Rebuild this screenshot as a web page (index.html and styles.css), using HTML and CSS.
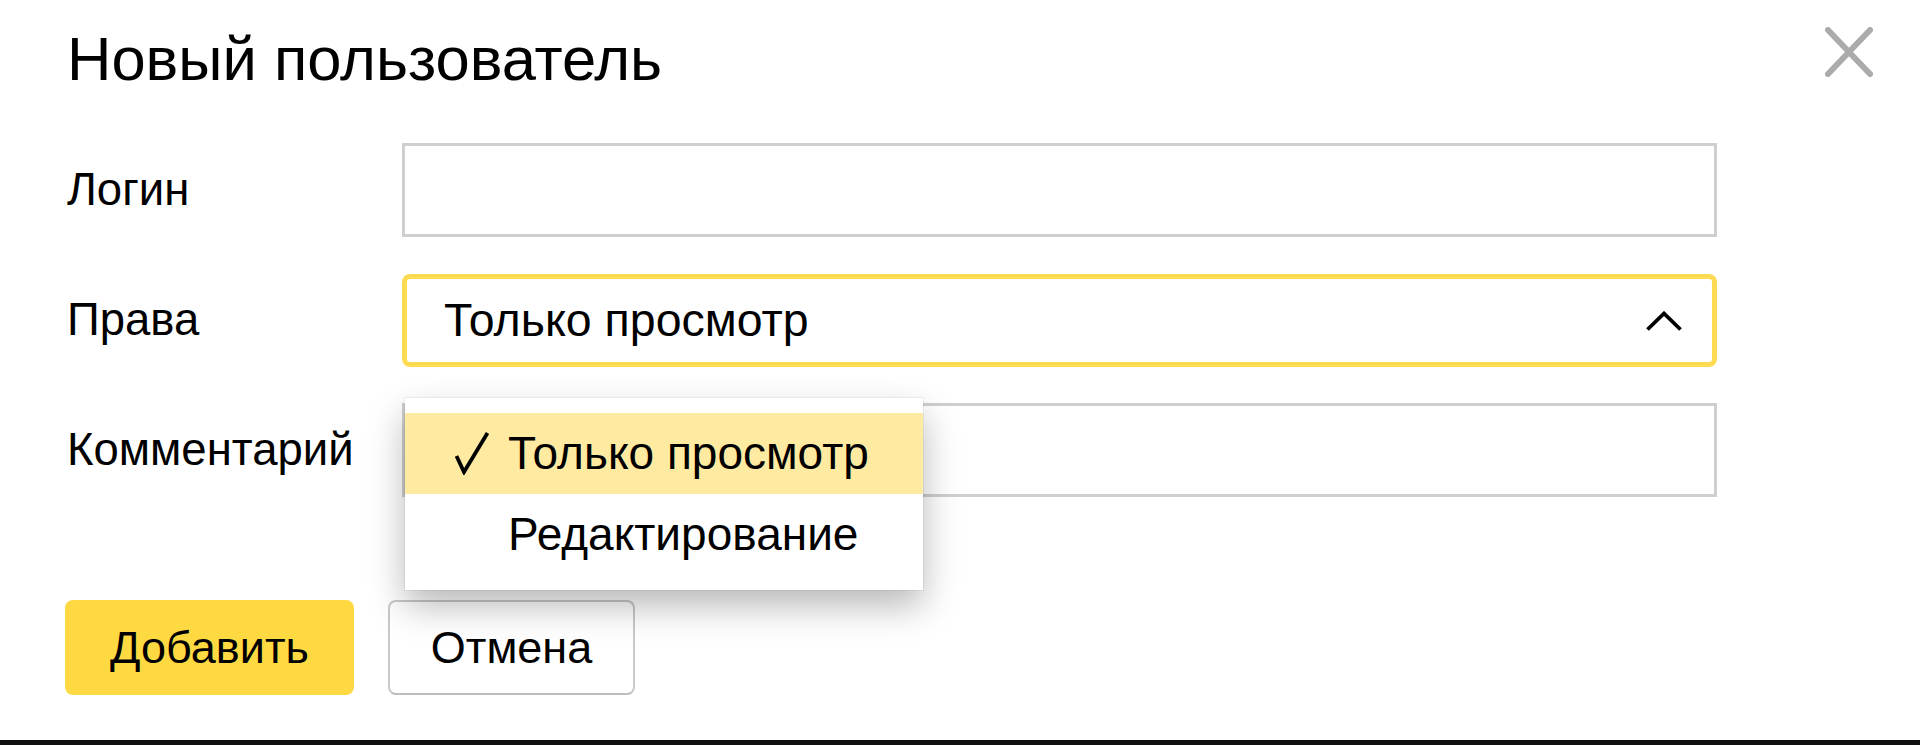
FILE: index.html
```html
<!DOCTYPE html>
<html lang="ru">
<head>
<meta charset="utf-8">
<title>Новый пользователь</title>
<link rel="stylesheet" href="styles.css">
</head>
<body>
<div class="page">
  <div class="dialog">
    <header class="head">
      <h1 class="title">Новый пользователь</h1>
      <button class="close" type="button" aria-label="Закрыть">
        <svg width="48" height="50" viewBox="0 0 48 50"><path d="M3 3 L45 47 M45 3 L3 47" stroke="#ababab" stroke-width="6" stroke-linecap="round" fill="none"/></svg>
      </button>
    </header>
    <div class="form">
      <div class="row">
        <div class="label">Логин</div>
        <div class="field input"></div>
      </div>
      <div class="row">
        <div class="label">Права</div>
        <div class="select-wrap">
          <div class="field select">
            <span class="select-text">Только просмотр</span>
            <svg class="chevron" width="38" height="21" viewBox="0 0 38 21"><path d="M2.5 18.5 L19 2.5 L35.5 18.5" stroke="#000" stroke-width="3.8" fill="none"/></svg>
          </div>
          <div class="menu">
            <div class="item item-active">
              <svg class="check" width="36" height="44" viewBox="0 0 36 44"><path d="M2.5 25 L10 41 L33.5 2" stroke="#000" stroke-width="3.8" fill="none" stroke-linejoin="miter"/></svg>
              <span>Только просмотр</span>
            </div>
            <div class="item"><span>Редактирование</span></div>
          </div>
        </div>
      </div>
      <div class="row">
        <div class="label">Комментарий</div>
        <div class="field input"></div>
      </div>
    </div>
    <div class="actions">
      <button class="btn btn-primary" type="button">Добавить</button>
      <button class="btn btn-default" type="button">Отмена</button>
    </div>
  </div>
  <div class="bottom-bar"></div>
</div>
</body>
</html>
```

FILE: styles.css
```css
html, body {
  margin: 0;
  padding: 0;
  background: #ffffff;
}

body {
  font-family: "Liberation Sans", Arial, sans-serif;
  color: #000;
}

.page {
  min-height: 745px;
  height: 100vh;
  display: flex;
  flex-direction: column;
  overflow: hidden;
}

.dialog {
  padding: 24px 47px 0 67px;
}

.head {
  display: flex;
  justify-content: space-between;
  align-items: flex-start;
}

.title {
  margin: 0;
  font-size: 61.5px;
  line-height: 70px;
  font-weight: 400;
}

.close {
  margin-top: 3px;
  padding: 0;
  border: 0;
  background: none;
  width: 48px;
  height: 50px;
  display: block;
}

.close svg {
  display: block;
}

.form {
  width: 1650px;
  margin-top: 49px;
  display: flex;
  flex-direction: column;
  gap: 36px;
}

.row {
  display: flex;
  align-items: center;
  height: 94px;
}

.label {
  width: 335px;
  flex: none;
  font-size: 45.5px;
}

.field {
  box-sizing: border-box;
  width: 1315px;
  height: 94px;
  background: #fff;
}

.input {
  border: 3px solid #cfcfcf;
}

.select-wrap {
  position: relative;
  width: 1315px;
}

.select {
  height: 93px;
  border: 5px solid #fedb52;
  border-radius: 8px;
  display: flex;
  align-items: center;
  justify-content: space-between;
  padding: 0 29px 0 37px;
  font-size: 46.5px;
}

.chevron {
  display: block;
  margin-top: 2px;
}

.menu {
  position: absolute;
  left: 3px;
  top: 124px;
  width: 518px;
  padding: 15px 0 15px;
  background: #fff;
  box-shadow: 0 0 0 1px rgba(0, 0, 0, 0.05), 0 16px 34px rgba(0, 0, 0, 0.28);
  z-index: 2;
}

.item {
  position: relative;
  height: 81px;
  line-height: 81px;
  padding-left: 103px;
  font-size: 46px;
  white-space: nowrap;
}

.item-active {
  background: #ffeaa1;
}

.check {
  position: absolute;
  left: 49px;
  top: 18px;
  display: block;
}

.actions {
  margin-top: 103px;
  margin-left: -2px;
  display: flex;
  gap: 34px;
}

.btn {
  box-sizing: border-box;
  height: 95px;
  padding: 0;
  border-radius: 8px;
  font-family: "Liberation Sans", Arial, sans-serif;
  font-size: 45px;
  color: #000;
}

.btn-primary {
  background: #fed942;
  border: 0;
  width: 289px;
}

.btn-default {
  background: #fff;
  border: 2px solid #c9c9c9;
  border-bottom-color: #bdbdbd;
  width: 247px;
}

.bottom-bar {
  margin-top: auto;
  height: 5px;
  background: #111;
}
```
